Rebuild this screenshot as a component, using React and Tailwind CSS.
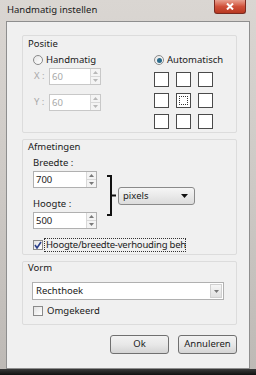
import React from 'react';

const font = { fontFamily: '"Noto Sans", "Open Sans", Arial, sans-serif' };

// kleine spin-knoppen naast een invoerveld
const Spinner = ({ disabled }) => (
    <div className="flex flex-col w-[10px] h-full border-l border-[#d8d8d8]">
        <div className="flex-1 flex items-center justify-center border-b border-[#d8d8d8] bg-[#f4f4f4]">
            <svg width="5" height="3" viewBox="0 0 5 3"><path d="M0 3 L2.5 0 L5 3 Z" fill={disabled ? '#b8b8b8' : '#7a7a7a'} /></svg>
        </div>
        <div className="flex-1 flex items-center justify-center bg-[#f4f4f4]">
            <svg width="5" height="3" viewBox="0 0 5 3"><path d="M0 0 L2.5 3 L5 0 Z" fill={disabled ? '#b8b8b8' : '#7a7a7a'} /></svg>
        </div>
    </div>
);

const SpinInput = ({ value, disabled, width }) => (
    <div className={`flex h-[17px] bg-white border ${disabled ? 'border-[#c8c8c8] text-[#a8a8a8]' : 'border-[#b0b0b0] text-[#1a1a1a]'}`} style={{ width }}>
        <div className="flex-1 pl-[2px] text-[9.5px] leading-[15px]">{value}</div>
        <Spinner disabled={disabled} />
    </div>
);

const Radio = ({ checked, label }) => (
    <div className="flex items-center h-[12px]">
        <div className="w-[10px] h-[10px] rounded-full border border-[#8a8a8a] bg-gradient-to-br from-[#e6e6e6] to-white flex items-center justify-center">
            {checked && <div className="w-[5px] h-[5px] rounded-full bg-[#2a6a8a]" />}
        </div>
        <span className="ml-[3px] text-[9.5px] leading-[12px] text-[#1a1a1a]">{label}</span>
    </div>
);

const Checkbox = ({ checked, children }) => (
    <div className="flex items-center h-[14px]">
        <div className="w-[10px] h-[10px] border border-[#8a8a8a] bg-gradient-to-br from-[#e2e2e2] to-white flex items-center justify-center">
            {checked && (
                <svg width="8" height="8" viewBox="0 0 8 8"><path d="M1 4 L3 7 L7 1" stroke="#2a3f8a" strokeWidth="1.6" fill="none" /></svg>
            )}
        </div>
        {children}
    </div>
);

const Group = ({ label, className, children }) => (
    <div className={`border border-[#dcdcdc] rounded-[2px] pl-[10px] ${className}`}>
        <div className="-ml-[5px] text-[9.5px] leading-[12px] text-[#1a1a1a]">{label}</div>
        {children}
    </div>
);

const Btn = ({ children }) => (
    <div className="w-[59px] h-[19px] rounded-[3px] border border-[#707070] bg-gradient-to-b from-[#f2f2f2] via-[#e8e8e8] to-[#d4d4d4] flex items-center justify-center text-[9.5px] text-[#1a1a1a]">
        {children}
    </div>
);

const App = () => {
    return (
        <div className="relative w-[256px] h-[375px] overflow-hidden bg-gradient-to-b from-[#dad6d2] via-[#cdc9c5] to-[#bdb9b5]" style={font}>
            {/* titelbalk */}
            <div className="h-[21px] pl-[7px] flex items-center text-[9.5px] text-[#1a1a1a]">Handmatig instellen</div>
            <div className="absolute top-0 left-[214px] w-[32px] h-[14px] rounded-b-[3px] border border-t-0 border-[#7a2a20] bg-gradient-to-b from-[#e8a090] via-[#d0503a] to-[#b83820] flex items-center justify-center">
                <svg width="8" height="7" viewBox="0 0 8 7"><path d="M1 0.5 L7 6.5 M7 0.5 L1 6.5" stroke="white" strokeWidth="2" /></svg>
            </div>

            {/* client gebied */}
            <div className="ml-[6px] w-[244px] h-[348px] border border-[#8e8e8e] bg-[#f0f0f0] pl-[15px] pr-[12px]">
                {/* Positie */}
                <Group label="Positie" className="mt-[13px] h-[98px] pt-[2px]">
                    <div className="flex mt-[4px]">
                        <div className="w-[121px] flex flex-col">
                            <Radio label="Handmatig" />
                            <div className="flex items-center mt-[2px] text-[#a8a8a8] text-[9.5px]">
                                <span className="w-[16px] pl-[1px]">X :</span>
                                <SpinInput value="60" disabled width="52px" />
                            </div>
                            <div className="flex items-center mt-[9px] text-[#a8a8a8] text-[9.5px]">
                                <span className="w-[16px] pl-[1px]">Y :</span>
                                <SpinInput value="60" disabled width="52px" />
                            </div>
                        </div>
                        <div className="flex flex-col">
                            <Radio checked label="Automatisch" />
                            <div className="grid grid-cols-[15px_15px_15px] gap-x-[7px] gap-y-[6px] mt-[6px]">
                                {[0, 1, 2, 3, 4, 5, 6, 7, 8].map((i) => (
                                    <div key={i} className="w-[15px] h-[15px] border border-[#4a4a4a] bg-white flex items-center justify-center">
                                        {i === 4 && <div className="w-[9px] h-[9px] border border-dotted border-[#333]" />}
                                    </div>
                                ))}
                            </div>
                        </div>
                    </div>
                </Group>

                {/* Afmetingen */}
                <Group label="Afmetingen" className="mt-[6px] h-[116px] pt-[1px]">
                    <div className="flex">
                        <div className="flex flex-col">
                            <div className="mt-[4px] text-[9.5px] leading-[12px] text-[#1a1a1a]">Breedte :</div>
                            <div className="mt-[2px]"><SpinInput value="700" width="64px" /></div>
                            <div className="mt-[10px] text-[9.5px] leading-[12px] text-[#1a1a1a]">Hoogte :</div>
                            <div className="mt-[2px]"><SpinInput value="500" width="64px" /></div>
                        </div>
                        <svg className="ml-[10px] mt-[22px]" width="9" height="41" viewBox="0 0 9 41">
                            <path d="M0 1 H4 V40 H0 M4 20.5 H9" stroke="#111" strokeWidth="2" fill="none" />
                        </svg>
                        <div className="ml-[2px] mt-[34px] w-[77px] h-[18px] rounded-[3px] border border-[#8a8a8a] bg-gradient-to-b from-[#f6f6f6] to-[#dcdcdc] flex items-center justify-between pl-[4px] pr-[6px] text-[9.5px] text-[#1a1a1a]">
                            <span>pixels</span>
                            <svg width="7" height="4" viewBox="0 0 7 4"><path d="M0 0 L3.5 4 L7 0 Z" fill="#111" /></svg>
                        </div>
                    </div>
                    <div className="mt-[9px]">
                        <Checkbox checked>
                            <div className="ml-[1px] w-[142px] h-[14px] border border-dotted border-[#333] whitespace-nowrap pl-[1px] text-[9.5px] leading-[12px] tracking-[-0.2px] text-[#1a1a1a]">
                                Hoogte/breedte-verhouding beh
                            </div>
                        </Checkbox>
                    </div>
                </Group>

                {/* Vorm */}
                <Group label="Vorm" className="mt-[6px] h-[64px] pt-[0px]">
                    <div className="mt-[8px] w-[192px] h-[18px] -ml-[1px] bg-white border border-[#b0b0b0] flex items-center justify-between pl-[3px] pr-[1px] text-[9.5px] text-[#1a1a1a]">
                        <span>Rechthoek</span>
                        <div className="w-[12px] h-[14px] border border-[#d0d0d0] bg-gradient-to-b from-[#f6f6f6] to-[#e0e0e0] flex items-center justify-center">
                            <svg width="5" height="3" viewBox="0 0 5 3"><path d="M0 0 L2.5 3 L5 0 Z" fill="#777" /></svg>
                        </div>
                    </div>
                    <div className="mt-[4px]">
                        <Checkbox>
                            <span className="ml-[4px] text-[9.5px] leading-[12px] text-[#1a1a1a]">Omgekeerd</span>
                        </Checkbox>
                    </div>
                </Group>

                {/* knoppen */}
                <div className="mt-[10px] flex justify-end gap-[9px]">
                    <Btn>Ok</Btn>
                    <Btn>Annuleren</Btn>
                </div>
            </div>
            <div className="h-[6px] bg-gradient-to-b from-[#3a3a3a] to-[#111]" />
        </div>
    );
};

export default App;
